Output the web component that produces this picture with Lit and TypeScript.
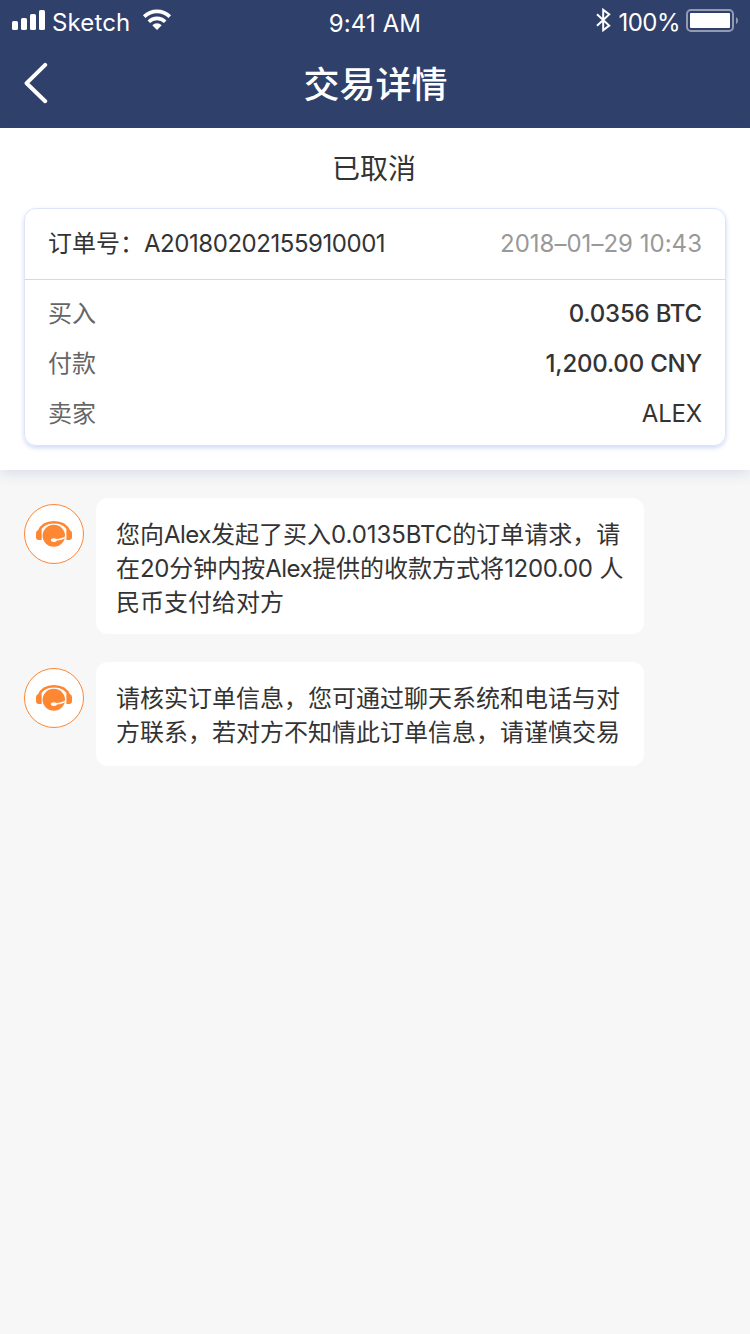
import { LitElement, html, css } from "lit";
import { customElement, property } from "lit/decorators.js";

const fontStack = css`Inter, "Noto Sans CJK SC", sans-serif`;

@customElement("status-bar")
class StatusBar extends LitElement {
  static styles = css`
    :host {
      display: grid;
      grid-template-columns: 1fr auto 1fr;
      height: 40px;
      color: #fff;
      font: 400 24px/28px ${fontStack};
      white-space: nowrap;
    }
    .left, .right { display: flex; align-items: flex-start; }
    .left { padding-left: 12px; }
    .right { justify-content: flex-end; padding-right: 11px; }
    .text { margin-top: 9px; }
    .carrier { margin-left: 7px; letter-spacing: 0.15px; }
    .time { margin-top: 10px; letter-spacing: 0.1px; }
    .percent { margin-left: 7px; letter-spacing: -0.5px; }
    .signal { margin-top: 10px; }
    .wifi { margin: 9px 0 0 12px; }
    .bt { margin-top: 8px; }
    .battery { margin: 9px 0 0 6px; }
    svg { display: block; flex: none; }
  `;
  render() {
    return html`
      <div class="left">
        <svg class="signal" width="33" height="20" fill="#fff">
          <rect x="0" y="11" width="6" height="9" rx="1.6" />
          <rect x="9" y="8" width="6" height="12" rx="1.6" />
          <rect x="18" y="4" width="6" height="16" rx="1.6" />
          <rect x="27" y="0" width="6" height="20" rx="1.6" />
        </svg>
        <span class="text carrier">Sketch</span>
        <svg class="wifi" width="30" height="22" viewBox="0 0 30 22">
          <g fill="none" stroke="#fff" stroke-width="3.6">
            <path d="M2.2 7.6 A18.2 18.2 0 0 1 27.8 7.6" />
            <path d="M6.8 12.7 A11.7 11.7 0 0 1 23.2 12.7" />
          </g>
          <path fill="#fff" d="M10.3 16.3 A6.7 6.7 0 0 1 19.7 16.3 L15 21 Z" />
        </svg>
      </div>
      <span class="text time">9:41 AM</span>
      <div class="right">
        <svg class="bt" width="15" height="24" viewBox="0 0 15 24">
          <path fill="none" stroke="#fff" stroke-width="2" d="M1 6.2 L13.2 17.6 L7.2 22.2 V1.8 L13.2 6.4 L1 17.8" />
        </svg>
        <span class="text percent">100%</span>
        <svg class="battery" width="53" height="23" viewBox="0 0 53 23">
          <rect x="1" y="1" width="46" height="21" rx="4" fill="none" stroke="#fff" stroke-opacity=".48" stroke-width="2" />
          <rect x="4" y="4" width="40" height="15" rx="1" fill="#fff" />
          <path d="M50 8 A4 4 0 0 1 50 15 Z" fill="#fff" fill-opacity=".48" />
        </svg>
      </div>
    `;
  }
}

@customElement("chat-message")
class ChatMessage extends LitElement {
  @property({ attribute: false }) lines: string[] = [];
  static styles = css`
    :host { display: flex; align-items: flex-start; gap: 12px; }
    .avatar {
      flex: none;
      box-sizing: border-box;
      width: 60px;
      height: 60px;
      margin-top: 6px;
      border: 1px solid #fd8733;
      border-radius: 50%;
      background: #fff;
    }
    .avatar svg { display: block; }
    .bubble {
      box-sizing: border-box;
      width: 548px;
      min-height: 104px;
      padding: 20px 20px 14px;
      border-radius: 12px;
      background: #fff;
      color: #333;
      font: 400 24px/34px ${fontStack};
    }
    .line { white-space: nowrap; }
    .word { letter-spacing: -0.5px; }
    .number { letter-spacing: -0.3px; }
    .amount { letter-spacing: -0.05px; }
  `;
  private kind(part: string) {
    if (!/\d/.test(part)) return "word";
    return /[A-Z]/.test(part) ? "amount" : "number";
  }
  render() {
    return html`
      <div class="avatar">
        <svg width="58" height="58" viewBox="1 1 58 58">
          <path fill="none" stroke="#fd8733" stroke-width="2.4" d="M14.8 27.5 C17 21.5 22.8 18.2 30 18.2 C37.2 18.2 43 21.5 45.2 27.5" />
          <path fill="#fd8733" d="M17.6 25.6 V36 H14.4 Q12 36 12 33.6 V29 Q12 26.4 14.6 26 Z" />
          <path fill="#fd8733" d="M42.4 25.6 V36 H45.6 Q48 36 48 33.6 V29 Q48 26.4 45.4 26 Z" />
          <ellipse cx="29.8" cy="31.8" rx="11.2" ry="11" fill="#fd8733" />
          <path fill="none" stroke="#fff" stroke-width="1.5" d="M42 32.6 C40 34.8 36.5 35.6 31 36" />
          <ellipse cx="29.9" cy="36.1" rx="3" ry="1.9" fill="#fff" />
        </svg>
      </div>
      <div class="bubble">
        ${this.lines.map(
          (line) => html`<div class="line">${line
            .split(/([\x21-\x7e]+)/)
            .map((part, i) => (i % 2 ? html`<span class=${this.kind(part)}>${part}</span>` : part))}</div>`
        )}
      </div>
    `;
  }
}

@customElement("app-root")
class AppRoot extends LitElement {
  static styles = css`
    :host {
      display: block;
      min-height: 1334px;
      background: #f7f7f7;
      font-family: ${fontStack};
      color: #333;
    }
    .header { height: 128px; background: #2f406b; }
    .nav {
      display: grid;
      grid-template-columns: 1fr auto 1fr;
      align-items: center;
      height: 88px;
      color: #fff;
    }
    .back { display: block; margin-left: 22px; }
    .title { padding: 1px 0 0 1px; font-size: 36px; line-height: 50px; font-weight: 500; }
    .summary {
      box-sizing: border-box;
      height: 342px;
      padding: 21px 24px 24px;
      background: #fff;
      box-shadow: 0 4px 12px rgba(47, 77, 160, 0.14);
    }
    .state { padding-right: 2px; font-size: 28px; line-height: 40px; text-align: center; margin-bottom: 19px; }
    .card {
      box-sizing: border-box;
      height: 238px;
      border: 1px solid #dde4f8;
      border-radius: 12px;
      box-shadow: 0 2px 4px rgba(80, 120, 225, 0.28);
      font-size: 24px;
    }
    .row {
      display: flex;
      justify-content: space-between;
      align-items: baseline;
      height: 50px;
      padding: 0 23px;
      line-height: 50px;
      white-space: nowrap;
    }
    .order { height: 70px; line-height: 70px; border-bottom: 1px solid #d9d9d9; }
    .rows { padding-top: 9px; }
    .latin { letter-spacing: -0.45px; }
    .date { color: #999; letter-spacing: 0.02px; }
    .label { color: #666; }
    .value { letter-spacing: -0.2px; }
    .strong { font-weight: 500; }
    .chat { display: flex; flex-direction: column; gap: 28px; padding: 28px 24px; }
  `;
  private rows = [
    { label: "买入", value: "0.0356 BTC", strong: true },
    { label: "付款", value: "1,200.00 CNY", strong: true },
    { label: "卖家", value: "ALEX", strong: false },
  ];
  private messages = [
    [
      "您向Alex发起了买入0.0135BTC的订单请求，请",
      "在20分钟内按Alex提供的收款方式将1200.00 人",
      "民币支付给对方",
    ],
    ["请核实订单信息，您可通过聊天系统和电话与对", "方联系，若对方不知情此订单信息，请谨慎交易"],
  ];
  render() {
    return html`
      <header class="header">
        <status-bar></status-bar>
        <div class="nav">
          <svg class="back" width="30" height="44" viewBox="0 0 30 44">
            <path fill="none" stroke="#fff" stroke-width="4" stroke-linecap="round" stroke-linejoin="round" d="M23.2 2.8 L4.6 21.2 L23.2 39.2" />
          </svg>
          <div class="title">交易详情</div>
        </div>
      </header>
      <section class="summary">
        <div class="state">已取消</div>
        <div class="card">
          <div class="row order">
            <span>订单号：<span class="latin">A20180202155910001</span></span>
            <span class="date">2018–01–29 10:43</span>
          </div>
          <div class="rows">
            ${this.rows.map(
              (r) => html`<div class="row">
                <span class="label">${r.label}</span>
                <span class="value ${r.strong ? "strong" : ""}">${r.value}</span>
              </div>`
            )}
          </div>
        </div>
      </section>
      <main class="chat">
        ${this.messages.map((m) => html`<chat-message .lines=${m}></chat-message>`)}
      </main>
    `;
  }
}
